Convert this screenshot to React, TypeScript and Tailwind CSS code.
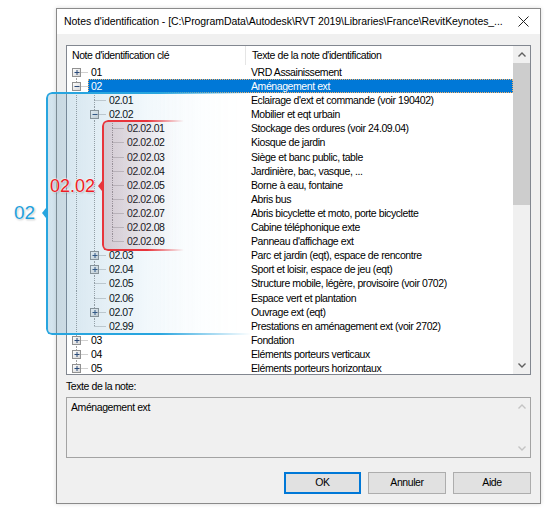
import React from "react";

type Row = {
  level: number;
  key: string;
  text: string;
  box?: "+" | "-";
  selected?: boolean;
};

const rows: Row[] = [
  { level: 0, key: "01", text: "VRD Assainissement", box: "+" },
  { level: 0, key: "02", text: "Aménagement ext", box: "-", selected: true },
  { level: 1, key: "02.01", text: "Eclairage d'ext et commande (voir 190402)" },
  { level: 1, key: "02.02", text: "Mobilier et eqt urbain", box: "-" },
  { level: 2, key: "02.02.01", text: "Stockage des ordures (voir 24.09.04)" },
  { level: 2, key: "02.02.02", text: "Kiosque de jardin" },
  { level: 2, key: "02.02.03", text: "Siège et banc public, table" },
  { level: 2, key: "02.02.04", text: "Jardinière, bac, vasque, ..." },
  { level: 2, key: "02.02.05", text: "Borne à eau, fontaine" },
  { level: 2, key: "02.02.06", text: "Abris bus" },
  { level: 2, key: "02.02.07", text: "Abris bicyclette et moto, porte bicyclette" },
  { level: 2, key: "02.02.08", text: "Cabine téléphonique exte" },
  { level: 2, key: "02.02.09", text: "Panneau d'affichage ext" },
  { level: 1, key: "02.03", text: "Parc et jardin (eqt), espace de rencontre", box: "+" },
  { level: 1, key: "02.04", text: "Sport et loisir, espace de jeu (eqt)", box: "+" },
  { level: 1, key: "02.05", text: "Structure mobile, légère, provisoire (voir 0702)" },
  { level: 1, key: "02.06", text: "Espace vert et plantation" },
  { level: 1, key: "02.07", text: "Ouvrage ext (eqt)", box: "+" },
  { level: 1, key: "02.99", text: "Prestations en aménagement ext (voir 2702)" },
  { level: 0, key: "03", text: "Fondation", box: "+" },
  { level: 0, key: "04", text: "Eléments porteurs verticaux", box: "+" },
  { level: 0, key: "05", text: "Eléments porteurs horizontaux", box: "+" },
];

// is there another row at `depth` after index i, before its branch closes?
function continues(i: number, depth: number): boolean {
  if (depth === 0) return true; // root list runs on past the visible rows
  for (let j = i + 1; j < rows.length; j++) {
    if (rows[j].level < depth) return false;
    if (rows[j].level === depth) return true;
  }
  return false;
}

const FONT = "font-['Liberation_Sans',Arial,sans-serif]";
const TXT = "text-[10.5px] tracking-[-0.42px]";

function TreeLines({ index }: { index: number }) {
  const row = rows[index];
  const L = row.level;
  const w = 18 * L + 21;
  const gx = (d: number) => 9 + 18 * d + 0.5;
  const stroke = "#a0a0a0";
  const lines: React.ReactNode[] = [];
  for (let d = 0; d < L; d++) {
    if (continues(index, d)) {
      lines.push(<line key={`v${d}`} x1={gx(d)} y1={0} x2={gx(d)} y2={15} stroke={stroke} strokeDasharray="1 1" />);
    }
  }
  const x = gx(L);
  if (index > 0) lines.push(<line key="top" x1={x} y1={0} x2={x} y2={7} stroke={stroke} strokeDasharray="1 1" />);
  if (continues(index, L)) lines.push(<line key="bot" x1={x} y1={7} x2={x} y2={15} stroke={stroke} strokeDasharray="1 1" />);
  lines.push(<line key="h" x1={x} y1={7.5} x2={x + 11} y2={7.5} stroke={stroke} strokeDasharray="1 1" />);

  return (
    <svg width={w} height={14} className="shrink-0 overflow-visible">
      {lines}
      {row.box && (
        <g>
          <defs>
            <linearGradient id={`bx${index}`} x1="0" y1="0" x2="1" y2="1">
              <stop offset="0" stopColor="#ffffff" />
              <stop offset="1" stopColor="#d6d6d6" />
            </linearGradient>
          </defs>
          <rect x={x - 4} y={3.5} width={8} height={8} fill={`url(#bx${index})`} stroke="#919191" />
          <line x1={x - 2} y1={7.5} x2={x + 3} y2={7.5} stroke="#2b4a78" />
          {row.box === "+" && <line x1={x + 0.5} y1={5} x2={x + 0.5} y2={10} stroke="#2b4a78" />}
        </g>
      )}
    </svg>
  );
}

function Chevron({ down = false, color = "#606060" }: { down?: boolean; color?: string }) {
  return (
    <svg width="8" height="5" viewBox="0 0 8 5">
      <path d={down ? "M0.5 0.5 L4 4 L7.5 0.5" : "M0.5 4.5 L4 1 L7.5 4.5"} fill="none" stroke={color} strokeWidth="1.4" />
    </svg>
  );
}

function TreeList() {
  return (
    <div className="flex h-[330px] border border-[#828790] bg-white">
      <div className="flex min-w-0 flex-1 flex-col overflow-hidden">
        <div className={`flex h-[19px] shrink-0 items-center ${TXT} text-black`}>
          <div className="w-[179px] shrink-0 border-r border-[#e5e5e5] pl-[5px] leading-[19px]">Note d'identification clé</div>
          <div className="flex-1 pl-[6px] leading-[19px]">Texte de la note d'identification</div>
        </div>
        {rows.map((r, i) => (
          <div key={r.key} className={`flex h-[14.1px] shrink-0 items-stretch ${TXT} leading-[14px]`}>
            <TreeLines index={i} />
            <div
              className={
                r.selected
                  ? "flex flex-1 border border-dotted border-[#f5b26b] bg-[#0078d7] text-white"
                  : "flex flex-1 border border-transparent text-black"
              }
            >
              <div className="shrink-0 pl-[2px] leading-[12px]" style={{ width: 179 - (18 * r.level + 21) - 1 }}>
                {r.key}
              </div>
              <div className="flex-1 whitespace-nowrap pl-[5px] leading-[12px]">{r.text}</div>
            </div>
          </div>
        ))}
      </div>
      <div className="flex w-[17px] shrink-0 flex-col bg-[#f0f0f0]">
        <div className="flex h-[17px] items-center justify-center">
          <Chevron />
        </div>
        <div className="h-[142px] bg-[#cdcdcd]" />
        <div className="flex-1" />
        <div className="flex h-[17px] items-center justify-center">
          <Chevron down />
        </div>
      </div>
    </div>
  );
}

function Button({ label, primary = false }: { label: string; primary?: boolean }) {
  return (
    <div
      className={
        `flex h-[22px] items-center justify-center bg-[#e1e1e1] ${TXT} text-black ` +
        (primary ? "w-[77px] border-2 border-[#0078d7]" : "w-[78px] border border-[#adadad]")
      }
    >
      {label}
    </div>
  );
}

function Dialog() {
  return (
    <div className="ml-[56px] mt-[8px] flex h-[496px] w-[485px] flex-col border border-[#8a8a8a] bg-[#f0f0f0] shadow-[0_0_4px_rgba(0,0,0,0.15)]">
      <div className="flex h-[25px] shrink-0 items-center bg-white pl-[7px] pr-[11px]">
        <div className="flex-1 whitespace-nowrap text-[10.5px] tracking-[-0.07px] text-black">
          Notes d'identification - [C:\ProgramData\Autodesk\RVT 2019\Libraries\France\RevitKeynotes_...
        </div>
        <svg width="11" height="11" viewBox="0 0 11 11">
          <path d="M0.5 0.5 L10.5 10.5 M10.5 0.5 L0.5 10.5" stroke="#222" strokeWidth="1" />
        </svg>
      </div>
      <div className="flex flex-1 flex-col px-[9px] pt-[11px]">
        <TreeList />
        <div className={`mt-[4px] h-[14px] ${TXT} leading-[14px] text-black`}>Texte de la note:</div>
        <div className="mt-[4px] flex h-[61px] border border-[#a3a3a3] bg-[#f0f0f0]">
          <div className={`flex-1 pl-[4px] pt-[2px] ${TXT} leading-[14px] text-black`}>Aménagement ext</div>
          <div className="flex w-[17px] flex-col items-center justify-between py-[6px]">
            <Chevron color="#c4c4c4" />
            <Chevron down color="#c4c4c4" />
          </div>
        </div>
        <div className="mt-[14px] flex justify-end gap-[7px]">
          <Button label="OK" primary />
          <Button label="Annuler" />
          <Button label="Aide" />
        </div>
      </div>
    </div>
  );
}

function Notch({ color }: { color: string }) {
  return (
    <svg width="6" height="10" viewBox="0 0 6 10">
      <path d="M5 0 L1 5 L5 10 Z" fill={color} />
    </svg>
  );
}

export default function App() {
  return (
    <div className={`relative h-[509px] w-[547px] overflow-hidden bg-white ${FONT}`}>
      <Dialog />

      {/* bracket around the "02" branch */}
      <div className="pointer-events-none absolute left-[46px] top-[92px] h-[243px] w-[205px] rounded-l-[6px] border-2 border-r-0 border-[#28a5df] bg-linear-to-r from-[#4a90b8]/25 via-[#7fbde0]/10 to-transparent shadow-[0_2px_4px_rgba(40,120,170,0.25)] [mask-image:linear-gradient(to_right,#000_55%,transparent)]" />
      <div className="pointer-events-none absolute left-[41px] top-[208px]">
        <Notch color="#28a5df" />
      </div>
      <div className="pointer-events-none absolute left-[14px] top-[201px] text-[19px] leading-[24px] text-[#1ea0dc] [text-shadow:0_0_2px_#fff,0_0_2px_#fff,1px_1px_2px_rgba(0,0,0,0.3)]">
        02
      </div>

      {/* bracket around the "02.02" branch */}
      <div className="pointer-events-none absolute left-[102px] top-[120px] h-[131px] w-[82px] rounded-l-[6px] border-2 border-r-0 border-[#e8343b] bg-linear-to-r from-[#a05a6a]/25 to-transparent shadow-[0_2px_4px_rgba(200,60,60,0.25)] [mask-image:linear-gradient(to_right,#000_55%,transparent)]" />
      <div className="pointer-events-none absolute left-[97px] top-[181px]">
        <Notch color="#e8343b" />
      </div>
      <div className="pointer-events-none absolute left-[50px] top-[174px] text-[18px] leading-[24px] text-[#ee1c25] [text-shadow:0_0_2px_#fff,0_0_2px_#fff,1px_1px_2px_rgba(0,0,0,0.3)]">
        02.02
      </div>
    </div>
  );
}
